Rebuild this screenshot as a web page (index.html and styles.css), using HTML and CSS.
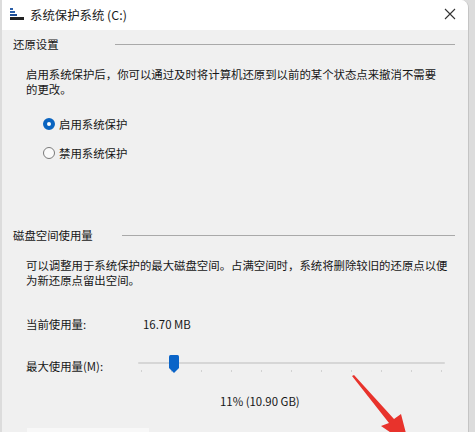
FILE: index.html
```html
<!DOCTYPE html>
<html lang="zh-CN">
<head>
    <meta charset="UTF-8">
    <title>系统保护系统 (C:)</title>
    <link rel="stylesheet" href="styles.css">
</head>
<body>
    <div class="window">
        <div class="titlebar">
            <svg class="app-icon" width="14" height="12" viewBox="0 0 14 12">
                <rect x="0" y="0" width="3" height="2" fill="#2b5fa8"/>
                <rect x="0" y="3" width="5" height="2" fill="#2b5fa8"/>
                <rect x="0" y="6" width="7" height="2" fill="#1f4f96"/>
                <rect x="0" y="9" width="14" height="3" fill="#222"/>
            </svg>
            <span class="title">系统保护系统 (C:)</span>
            <svg class="close" width="12" height="12" viewBox="0 0 12 12">
                <path d="M1 1 L11 11 M11 1 L1 11" stroke="#333" stroke-width="1.1" fill="none"/>
            </svg>
        </div>

        <div class="content">
            <div class="group-head">
                <span>还原设置</span>
                <div class="rule rule-first"></div>
            </div>
            <p class="desc">启用系统保护后，你可以通过及时将计算机还原到以前的某个状态点来撤消不需要<br>的更改。</p>
            <div class="radios">
                <label class="radio checked"><span class="dot"></span>启用系统保护</label>
                <label class="radio"><span class="dot"></span>禁用系统保护</label>
            </div>

            <div class="group-head second">
                <span>磁盘空间使用量</span>
                <div class="rule rule-second"></div>
            </div>
            <p class="desc">可以调整用于系统保护的最大磁盘空间。占满空间时，系统将删除较旧的还原点以便<br>为新还原点留出空间。</p>

            <div class="usage-row">
                <span class="usage-label">当前使用量:</span>
                <span>16.70 MB</span>
            </div>
            <div class="usage-row max-row">
                <span class="usage-label">最大使用量(M):</span>
                <div class="slider">
                    <div class="track"></div>
                    <svg class="thumb" width="10" height="18" viewBox="0 0 10 18">
                        <path d="M1.5 0 H8.5 Q10 0 10 1.5 V13 L5 18 L0 13 V1.5 Q0 0 1.5 0 Z" fill="#0a64c8"/>
                    </svg>
                    <div class="ticks">
                        <i></i><i></i><i></i><i></i><i></i><i></i><i></i><i></i><i></i><i></i><i></i>
                    </div>
                </div>
            </div>
            <div class="percent">11% (10.90 GB)</div>
            <div class="delete-row"></div>
        </div>

        <svg class="arrow" width="80" height="70" viewBox="0 0 80 70">
            <polygon points="3,1 5,0 45,44 52,39 60,70 32,51 40,48" fill="#e8332c"/>
        </svg>
    </div>
</body>
</html>
```

FILE: styles.css
```css
body {
    margin: 0;
    padding: 0;
    background-color: #dcdcdc;
    font-family: "Noto Sans CJK SC", "Noto Sans", sans-serif;
    font-size: 11.4px;
    color: #161616;
    width: 475px;
    height: 432px;
    overflow: hidden;
}

.window {
    position: relative;
    width: 466px;
    height: 432px;
    margin-left: 2px;
    background-color: #f0f0f0;
    border-right: 1px solid #c4c4c4;
    border-top-right-radius: 8px;
    overflow: hidden;
}

.titlebar {
    height: 30px;
    background-color: #ffffff;
    display: flex;
    align-items: center;
    padding: 0 12px 0 8px;
}

.app-icon {
    margin-right: 6px;
    margin-top: -2px;
}

.title {
    font-size: 12.4px;
    flex-grow: 1;
    color: #1a1a1a;
}

.close {
    margin-top: -2px;
}

.content {
    padding: 0 13px 0 11px;
}

.group-head {
    display: flex;
    align-items: center;
    height: 16px;
    margin-top: 6px;
}

.group-head.second {
    margin-top: 65px;
}

.rule {
    flex-grow: 1;
    height: 1px;
    background-color: #a9a9a9;
}

.rule-first {
    margin-left: 56px;
}

.rule-second {
    margin-left: 29px;
}

.desc {
    margin: 15px 0 0 13px;
    line-height: 15px;
    white-space: nowrap;
}

.radios {
    margin: 18px 0 0 30px;
    display: flex;
    flex-direction: column;
    gap: 11px;
}

.radio {
    display: flex;
    align-items: center;
    height: 18px;
    gap: 4px;
}

.dot {
    width: 10px;
    height: 10px;
    border: 1px solid #7a7a7a;
    border-radius: 50%;
    background-color: #fafafa;
    box-sizing: content-box;
}

.radio.checked .dot {
    width: 4px;
    height: 4px;
    border: 4px solid #0a64c0;
    background-color: #ffffff;
}

.usage-row {
    display: flex;
    align-items: center;
    height: 16px;
    margin: 28px 0 0 13px;
}

.usage-label {
    width: 117px;
}

.max-row {
    margin-top: 26px;
}

.slider {
    position: relative;
    width: 307px;
    height: 16px;
    margin-left: -5px;
}

.track {
    height: 2px;
    margin-top: 4px;
    background-color: #d6d6d6;
    border-radius: 1px;
}

.thumb {
    position: absolute;
    left: 31px;
    top: -3px;
}

.ticks {
    display: flex;
    justify-content: space-between;
    padding: 0 3px;
    margin-top: 6px;
}

.ticks i {
    width: 1px;
    height: 2px;
    background-color: #d2d2d2;
}

.percent {
    margin: 19px 0 0 207px;
    height: 16px;
    line-height: 16px;
}

.delete-row {
    margin: 19px 0 0 14px;
    width: 122px;
    height: 10px;
    background-color: #f8f8f8;
}

.arrow {
    position: absolute;
    left: 347px;
    top: 375px;
}
```
